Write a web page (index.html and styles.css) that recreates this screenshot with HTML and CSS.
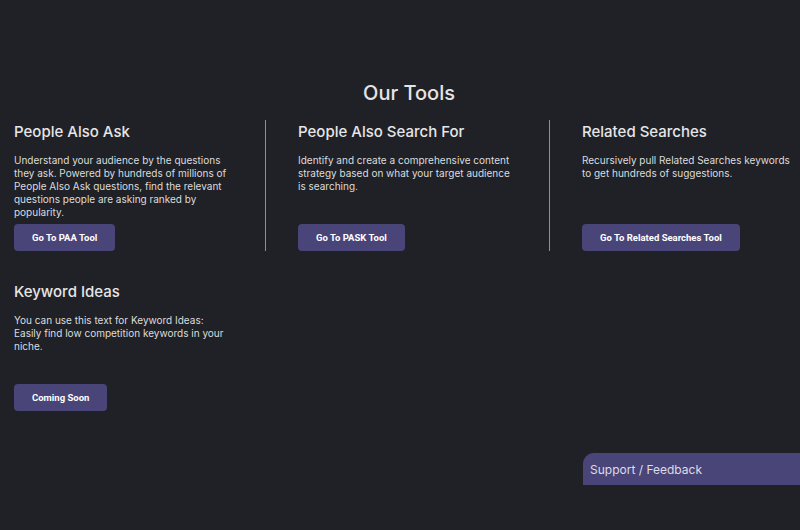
FILE: index.html
```html
<!DOCTYPE html>
<html lang="en">
<head>
  <meta charset="UTF-8">
  <meta name="viewport" content="width=device-width, initial-scale=1">
  <title>Our Tools</title>
  <link rel="stylesheet" href="styles.css">
</head>
<body>
  <main class="tools">
    <h1 class="tools-title">Our Tools</h1>

    <div class="tools-grid">
      <div class="tool divided">
        <h2>People Also Ask</h2>
        <p>Understand your audience by the questions they ask. Powered by hundreds of millions of People Also Ask questions, find the relevant questions people are asking ranked by popularity.</p>
        <a class="tool-btn" href="#">Go To PAA Tool</a>
      </div>

      <div class="tool divided">
        <h2>People Also Search For</h2>
        <p>Identify and create a comprehensive content strategy based on what your target audience is searching.</p>
        <a class="tool-btn" href="#">Go To PASK Tool</a>
      </div>

      <div class="tool">
        <h2>Related Searches</h2>
        <p>Recursively pull Related Searches keywords to get hundreds of suggestions.</p>
        <a class="tool-btn" href="#">Go To Related Searches Tool</a>
      </div>

      <div class="tool">
        <h2>Keyword Ideas</h2>
        <p>You can use this text for Keyword Ideas:<br>Easily find low competition keywords in your niche.</p>
        <a class="tool-btn" href="#">Coming Soon</a>
      </div>
    </div>
  </main>

  <a class="feedback-tab" href="#">Support / Feedback</a>
</body>
</html>
```

FILE: styles.css
```css
body {
  margin: 0;
  background-color: #1f2126;
  color: #e2e2e4;
  font-family: 'Inter', 'Noto Sans', sans-serif;
}
.tools {
  padding-top: 80px;
}
.tools-title {
  margin: 0 0 14px;
  padding-left: 18px;
  text-align: center;
  font-size: 20px;
  line-height: 26px;
  font-weight: 500;
  color: #e4e4e6;
}
.tools-grid {
  display: grid;
  grid-template-columns: 266px 284px 250px;
  row-gap: 29px;
}
.tool {
  display: flex;
  flex-direction: column;
  align-items: flex-start;
  min-height: 131px;
  padding-left: 32px;
}
.tool:nth-child(3n+1) {
  padding-left: 14px;
}
.tool.divided {
  border-right: 1px solid #8d8f95;
}
.tool h2 {
  margin: 2px 0 0;
  font-size: 15px;
  line-height: 20px;
  font-weight: 500;
  color: #e6e6e8;
}
.tool p {
  margin: 12px 0 5px;
  max-width: 220px;
  font-size: 10px;
  line-height: 13px;
  color: #dcdcde;
}
.tool-btn {
  margin-top: auto;
  padding: 0 18px;
  height: 27px;
  line-height: 27px;
  background-color: #4a4578;
  border-radius: 4px;
  color: #ffffff;
  font-family: 'Roboto', sans-serif;
  font-size: 9.5px;
  font-weight: 700;
  text-decoration: none;
}
.feedback-tab {
  position: fixed;
  right: 0;
  bottom: 45px;
  width: 210px;
  height: 32px;
  padding-left: 7px;
  line-height: 34px;
  background-color: #4a4578;
  border-top-left-radius: 11px;
  color: #dcdcea;
  font-size: 12px;
  text-decoration: none;
}
```
